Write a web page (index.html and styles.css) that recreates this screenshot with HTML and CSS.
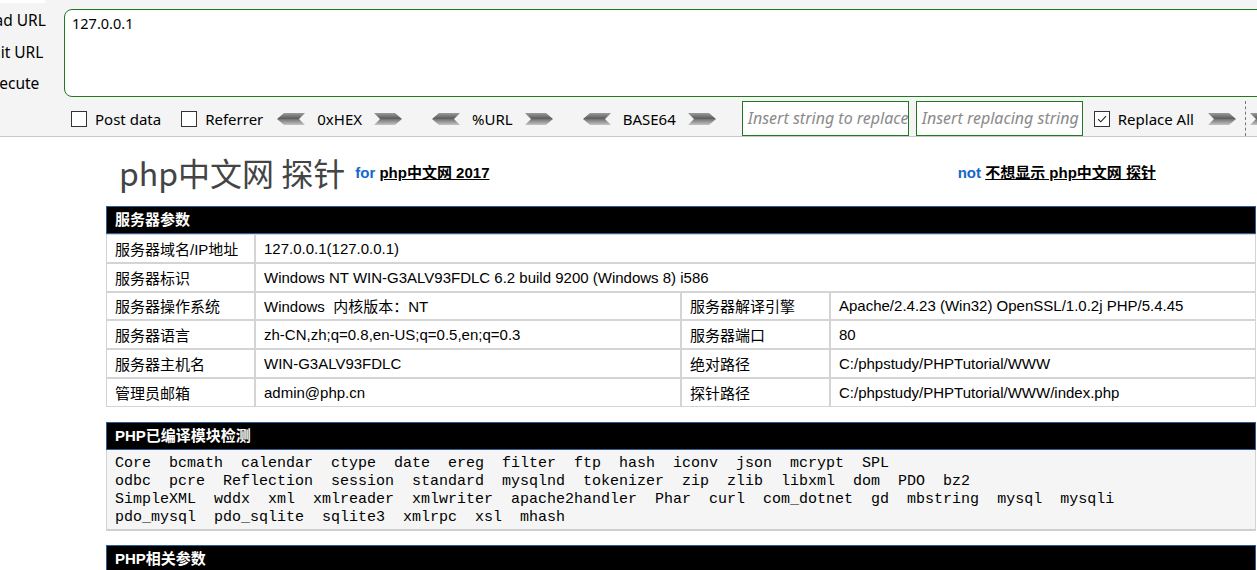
FILE: index.html
```html
<!DOCTYPE html>
<html lang="zh-CN">
<head>
<meta charset="utf-8">
<title>php中文网 探针</title>
<link rel="stylesheet" href="styles.css">
</head>
<body>
<div class="hackbar">
  <div class="hb-labels">
    <div class="stub"></div>
    <div class="lbl">Load URL</div>
    <div class="lbl">Split URL</div>
    <div class="lbl">Execute</div>
  </div>
  <div class="hb-right">
    <div class="urlbox">127.0.0.1</div>
    <div class="hb-tools">
      <span class="cb"></span><span class="tlabel t-post">Post data</span>
      <span class="cb"></span><span class="tlabel t-ref">Referrer</span>
      <span class="enc">
        <svg class="arr" viewBox="0 0 28 14"><use href="#arrL"/></svg>
        <span class="enc-label">0xHEX</span>
        <svg class="arr" viewBox="0 0 28 14"><use href="#arrR"/></svg>
      </span>
      <span class="enc">
        <svg class="arr" viewBox="0 0 28 14"><use href="#arrL"/></svg>
        <span class="enc-label">%URL</span>
        <svg class="arr" viewBox="0 0 28 14"><use href="#arrR"/></svg>
      </span>
      <span class="enc enc-last">
        <svg class="arr" viewBox="0 0 28 14"><use href="#arrL"/></svg>
        <span class="enc-label">BASE64</span>
        <svg class="arr" viewBox="0 0 28 14"><use href="#arrR"/></svg>
      </span>
      <span class="field f1">Insert string to replace</span>
      <span class="field f2">Insert replacing string</span>
      <span class="cb checked"><svg viewBox="0 0 16 16"><path d="M3.5 8.2 L6.6 11.2 L12.6 4.6" fill="none" stroke="#222" stroke-width="1.3"/></svg></span><span class="tlabel t-all">Replace All</span>
      <svg class="arr arr-go" viewBox="0 0 28 14"><use href="#arrR"/></svg>
      <span class="sep"></span>
      <svg class="arr arr-cut" viewBox="0 0 28 14"><use href="#arrR"/></svg>
    </div>
  </div>
</div>

<svg class="defs" width="0" height="0" aria-hidden="true">
  <defs>
    <linearGradient id="g" x1="0" y1="0" x2="0" y2="1">
      <stop offset="0" stop-color="#9b9b9b"/>
      <stop offset="0.45" stop-color="#5e5e5e"/>
      <stop offset="0.55" stop-color="#7a7a7a"/>
      <stop offset="1" stop-color="#c4c4c4"/>
    </linearGradient>
    <polygon id="arrL" points="0,7 7,1 28,1 22,7 28,13 7,13" fill="url(#g)"/>
    <polygon id="arrR" points="28,7 21,1 0,1 6,7 0,13 21,13" fill="url(#g)"/>
  </defs>
</svg>

<main class="page">
  <div class="title-row">
    <div class="title-left">
      <h1>php中文网 探针</h1>
      <span class="tag">for <a href="#">php中文网 2017</a></span>
    </div>
    <span class="tag">not <a href="#">不想显示 php中文网 探针</a></span>
  </div>

  <table class="info">
    <colgroup>
      <col class="c-k"><col class="c-v"><col class="c-k"><col class="c-v">
    </colgroup>
    <tr><th colspan="4">服务器参数</th></tr>
    <tr><td>服务器域名/IP地址</td><td colspan="3">127.0.0.1(127.0.0.1)</td></tr>
    <tr><td>服务器标识</td><td colspan="3">Windows NT WIN-G3ALV93FDLC 6.2 build 9200 (Windows 8) i586</td></tr>
    <tr><td>服务器操作系统</td><td>Windows&nbsp;&nbsp;内核版本：NT</td><td>服务器解译引擎</td><td>Apache/2.4.23 (Win32) OpenSSL/1.0.2j PHP/5.4.45</td></tr>
    <tr><td>服务器语言</td><td>zh-CN,zh;q=0.8,en-US;q=0.5,en;q=0.3</td><td>服务器端口</td><td>80</td></tr>
    <tr><td>服务器主机名</td><td>WIN-G3ALV93FDLC</td><td>绝对路径</td><td>C:/phpstudy/PHPTutorial/WWW</td></tr>
    <tr><td>管理员邮箱</td><td>admin@php.cn</td><td>探针路径</td><td>C:/phpstudy/PHPTutorial/WWW/index.php</td></tr>
  </table>

  <section class="block">
    <h2>PHP已编译模块检测</h2>
    <div class="mods">
      <div>Core bcmath calendar ctype date ereg filter ftp hash iconv json mcrypt SPL</div>
      <div>odbc pcre Reflection session standard mysqlnd tokenizer zip zlib libxml dom PDO bz2</div>
      <div>SimpleXML wddx xml xmlreader xmlwriter apache2handler Phar curl com_dotnet gd mbstring mysql mysqli</div>
      <div>pdo_mysql pdo_sqlite sqlite3 xmlrpc xsl mhash</div>
    </div>
  </section>

  <section class="block block-next">
    <h2>PHP相关参数</h2>
  </section>
</main>
</body>
</html>
```

FILE: styles.css
```css
html, body {
  margin: 0;
  padding: 0;
  background: #fff;
  overflow: hidden;
}

body {
  width: 1257px;
  height: 570px;
  font-family: "Liberation Sans", "Noto Sans CJK SC", sans-serif;
  color: #000;
}

.defs {
  display: block;
  height: 0;
}

/* ---------- HackBar ---------- */
.hackbar {
  display: flex;
  background: #f4f4f4;
  border-bottom: 1px solid #c8c8c8;
  height: 136px;
  overflow: hidden;
  font-family: "Noto Sans", "Noto Sans CJK SC", sans-serif;
  font-size: 15px;
}

.hb-labels {
  width: 68px;
  margin-left: -23px;
  flex: none;
  display: flex;
  flex-direction: column;
  font-size: 15.5px;
}

.stub {
  height: 3px;
  width: 45px;
  margin-left: 23px;
  background: #fff;
}

.lbl {
  height: 31.5px;
  line-height: 31.5px;
  text-align: center;
  white-space: nowrap;
}
.stub + .lbl { margin-top: 2px; }

.hb-right {
  margin-left: 19px;
  padding-top: 9px;
  flex: 1;
  min-width: 0;
}

.urlbox {
  width: 1300px;
  height: 88px;
  box-sizing: border-box;
  background: #fff;
  border: 1px solid #1f7a1f;
  border-radius: 8px;
  padding: 3px 7px;
  line-height: 20px;
  font-size: 14.5px;
}

.hb-tools {
  display: flex;
  align-items: center;
  height: 35px;
  margin-top: 4px;
  padding-left: 7px;
  white-space: nowrap;
}

.cb {
  width: 16px;
  height: 16px;
  box-sizing: border-box;
  border: 1px solid #333;
  background: #fff;
  flex: none;
  display: flex;
}
.cb svg { width: 14px; height: 14px; }

.tlabel { margin-left: 8px; }
.t-post { margin-right: 20px; }
.t-ref { margin-right: 14px; }

.enc {
  display: flex;
  align-items: center;
  margin-right: 30px;
}
.enc-last { margin-right: 26px; }

.arr {
  width: 28px;
  height: 14px;
  flex: none;
}

.enc-label { padding: 0 12px; }

.field {
  width: 167px;
  height: 35px;
  box-sizing: border-box;
  border: 1px solid #1f7a1f;
  background: #fff;
  color: #8a8a8a;
  font-style: italic;
  font-size: 16px;
  padding: 0 5px;
  line-height: 33px;
  overflow: hidden;
  flex: none;
}
.f1 { margin-right: 7px; }
.f2 { margin-right: 11px; }

.t-all { margin-right: 14px; }

.sep {
  width: 0;
  height: 35px;
  border-left: 1px dashed #777;
  margin: 0 4px 0 9px;
}

/* ---------- Page ---------- */
.page {
  margin-left: 106px;
  width: 1150px;
}

.title-row {
  height: 69px;
  display: flex;
  align-items: center;
  justify-content: space-between;
  padding-right: 100px;
  padding-left: 13px;
  box-sizing: border-box;
}

.title-left {
  display: flex;
  align-items: center;
}

h1 {
  margin: 0 10px 0 0;
  font-family: "Noto Sans CJK SC", sans-serif;
  font-weight: 400;
  font-size: 32px;
  color: #444;
}

.tag {
  font-weight: bold;
  font-size: 15px;
  color: #1567cc;
}
.tag a {
  color: #000;
  text-decoration: underline;
}

.info {
  width: 1150px;
  border-collapse: separate;
  border-spacing: 0;
  font-size: 15px;
  table-layout: fixed;
}
.c-k { width: 149px; }
.c-v { width: 426px; }

.info th,
.block h2 {
  background: #000;
  color: #fff;
  text-align: left;
  font-size: 15px;
  font-weight: bold;
  border: 1px solid #2e5d95;
  height: 28px;
  box-sizing: border-box;
  padding: 0 8px;
  margin: 0;
  line-height: 26px;
}

.info td {
  border: 1px solid #d4d4d4;
  padding: 0 8px;
  height: 28.8px;
  box-sizing: border-box;
  white-space: nowrap;
  overflow: hidden;
}

.block {
  margin-top: 15px;
}
.block-next { margin-top: 14px; }

.mods {
  background: #f5f5f5;
  border: 1px solid #d4d4d4;
  border-top: 0;
  border-bottom: 2px solid #cfcfcf;
  padding: 5px 8px 2px;
  font-family: "Liberation Mono", monospace;
  font-size: 15px;
  line-height: 18px;
  word-spacing: 9px;
  white-space: nowrap;
}
```
